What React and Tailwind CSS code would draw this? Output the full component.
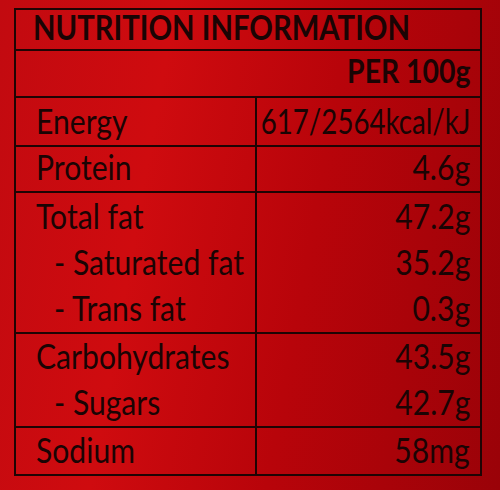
const font = { fontFamily: 'Lato, "Open Sans", sans-serif' };

function Row({ label, value, indent, narrow, h = 'h-[46px]', className = '' }) {
  return (
    <div className={`flex ${h} ${className}`}>
      <div className={`w-[241px] shrink-0 border-r-2 border-[#1f0404] flex items-end pb-[7px] whitespace-nowrap ${indent ? 'pl-[38px]' : 'pl-[20px]'}`}>
        <span className="inline-block origin-left scale-x-[0.86] text-[35px] leading-none">{label}</span>
      </div>
      <div className="flex-1 min-w-0 flex items-end justify-end pr-[10px] pb-[7px] whitespace-nowrap">
        <span className={`inline-block shrink-0 origin-right text-[35px] leading-none ${narrow ? 'scale-x-[0.79]' : 'scale-x-[0.86]'}`}>{value}</span>
      </div>
    </div>
  );
}

export default function App() {
  return (
    <div
      className="w-[500px] h-[490px] overflow-hidden bg-[linear-gradient(100deg,#c20a10_0%,#cf0b0f_30%,#b8040a_60%,#9a0208_100%)] pt-[8px] pl-[14px] text-[#1a0404]"
      style={font}
    >
      <div className="w-[468px] border-2 border-[#1f0404]">
        <div className="h-[41px] border-b-2 border-[#1f0404] flex items-end pl-[17px] pb-[5px] whitespace-nowrap">
          <span className="inline-block origin-left scale-x-[0.86] text-[34px] font-bold leading-none">NUTRITION INFORMATION</span>
        </div>
        <div className="h-[47px] border-b-2 border-[#1f0404] flex items-end justify-end pr-[10px] pb-[9px] whitespace-nowrap">
          <span className="inline-block origin-right scale-x-[0.86] text-[33px] font-bold leading-none">PER 100g</span>
        </div>
        <Row label="Energy" value="617/2564kcal/kJ" narrow h="h-[49px]" className="border-b-2 border-[#1f0404]" />
        <Row label="Protein" value="4.6g" className="border-b-2 border-[#1f0404]" />
        <div className="border-b-2 border-[#1f0404]">
          <Row label="Total fat" value="47.2g" h="h-[47px]" />
          <Row label="- Saturated fat" value="35.2g" indent />
          <Row label="- Trans fat" value="0.3g" indent />
        </div>
        <div className="border-b-2 border-[#1f0404]">
          <Row label="Carbohydrates" value="43.5g" />
          <Row label="- Sugars" value="42.7g" indent />
        </div>
        <Row label="Sodium" value="58mg" />
      </div>
    </div>
  );
}
